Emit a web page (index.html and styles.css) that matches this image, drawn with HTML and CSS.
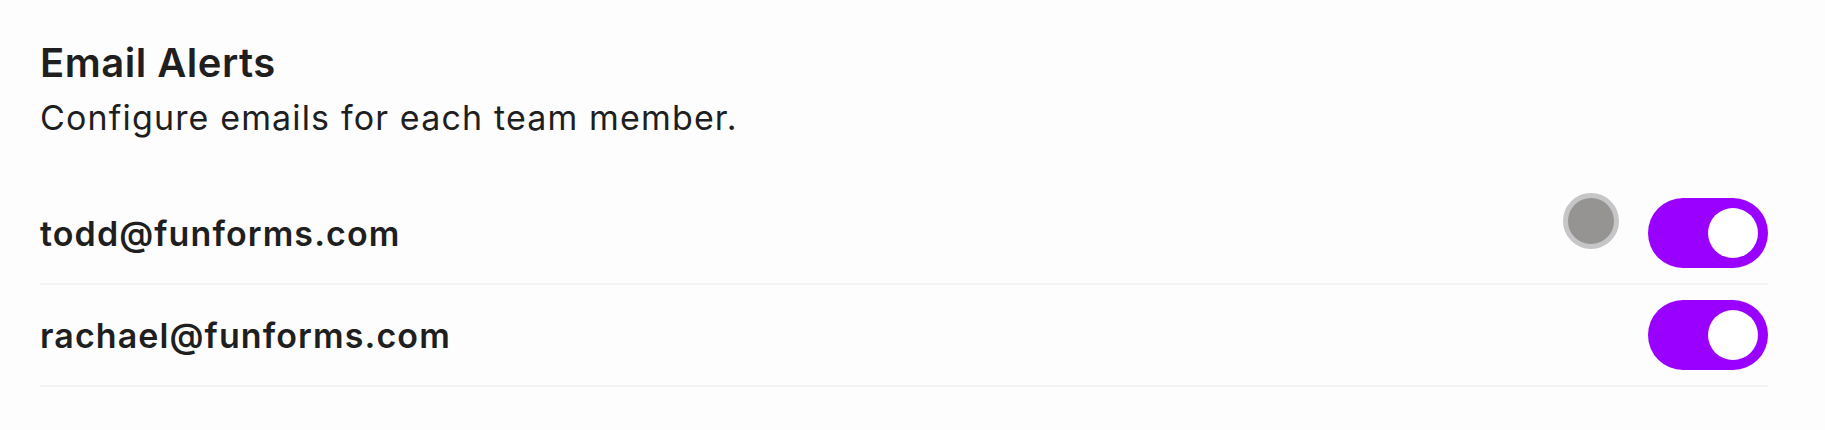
FILE: index.html
```html
<!DOCTYPE html>
<html>
<head>
<meta charset="utf-8">
<link rel="stylesheet" href="styles.css">
</head>
<body>
<main class="panel">
  <header class="panel-head">
    <h1 class="title">Email Alerts</h1>
    <p class="subtitle">Configure emails for each team member.</p>
  </header>
  <ul class="list">
    <li class="row">
      <span class="email">todd@funforms.com</span>
      <span class="switch on">
        <span class="ripple"></span>
        <span class="knob"></span>
      </span>
    </li>
    <li class="row">
      <span class="email">rachael@funforms.com</span>
      <span class="switch on">
        <span class="knob"></span>
      </span>
    </li>
  </ul>
</main>
</body>
</html>
```

FILE: styles.css
```css
html, body {
  margin: 0;
  padding: 0;
  background: #fdfdfd;
}
body {
  font-family: Inter, "Noto Sans", sans-serif;
  color: #1f1f1f;
}
.panel {
  padding: 38px 57px 0 40px;
}
.panel-head {
  display: flex;
  flex-direction: column;
  gap: 10px;
}
.title {
  margin: 0;
  font-size: 40px;
  font-weight: 600;
  line-height: normal;
  letter-spacing: 0.5px;
}
.subtitle {
  margin: 0;
  font-size: 34px;
  font-weight: 400;
  line-height: normal;
  letter-spacing: 1.15px;
}
.list {
  list-style: none;
  margin: 45px 0 0 0;
  padding: 0;
}
.row {
  display: flex;
  align-items: center;
  justify-content: space-between;
  padding: 15px 0;
  border-bottom: 2px solid #f3f3f3;
}
.email {
  font-size: 34px;
  font-weight: 600;
  letter-spacing: 1.1px;
}
.switch {
  position: relative;
  width: 120px;
  height: 70px;
  border-radius: 35px;
  background: #9900ff;
  display: flex;
  align-items: center;
  justify-content: flex-end;
  padding: 0 10px;
  box-sizing: border-box;
}
.knob {
  width: 50px;
  height: 50px;
  border-radius: 50%;
  background: #ffffff;
}
.ripple {
  position: absolute;
  left: -85px;
  top: -5px;
  width: 56px;
  height: 56px;
  box-sizing: border-box;
  border-radius: 50%;
  background: #959493;
  border: 5px solid #c6c6c8;
}
```
